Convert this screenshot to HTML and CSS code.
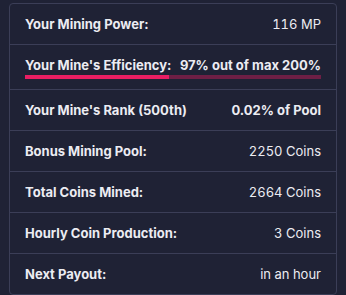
FILE: index.html
```html
<!DOCTYPE html>
<html>
<head>
<meta charset="utf-8">
<link rel="stylesheet" href="styles.css">
</head>
<body>
<div class="card">
  <div class="row"><span class="label">Your Mining Power:</span><span class="value">116 MP</span></div>
  <div class="row row-bar">
    <div class="line"><span class="label">Your Mine's Efficiency:</span><span class="value strong">97% out of max 200%</span></div>
    <div class="bar"><div class="fill" style="width:48.5%"></div></div>
  </div>
  <div class="row"><span class="label">Your Mine's Rank (500th)</span><span class="value strong">0.02% of Pool</span></div>
  <div class="row"><span class="label">Bonus Mining Pool:</span><span class="value">2250 Coins</span></div>
  <div class="row"><span class="label">Total Coins Mined:</span><span class="value">2664 Coins</span></div>
  <div class="row"><span class="label">Hourly Coin Production:</span><span class="value">3 Coins</span></div>
  <div class="row"><span class="label">Next Payout:</span><span class="value">in an hour</span></div>
</div>
</body>
</html>
```
FILE: styles.css
```css
html, body {
  margin: 0;
  padding: 0;
  background: #1f2235;
}
body {
  padding: 3px 9px 0 9px;
  font-family: Inter, "Noto Sans", sans-serif;
  font-size: 13px;
  line-height: 16px;
  color: #ececf2;
}
.card {
  border: 1px solid #3b3e57;
  border-radius: 4px;
  display: flex;
  flex-direction: column;
}
.row {
  display: flex;
  justify-content: space-between;
  align-items: center;
  padding: 12px 15px;
  border-bottom: 1px solid #3b3e57;
}
.row:last-child {
  border-bottom: none;
}
.row-bar {
  flex-direction: column;
  align-items: stretch;
  padding-bottom: 10px;
}
.line {
  display: flex;
  justify-content: space-between;
}
.label {
  font-weight: 700;
}
.value {
  font-weight: 400;
  font-variant-numeric: tabular-nums;
}
.value.strong {
  font-weight: 700;
  font-variant-numeric: normal;
}
.bar {
  margin-top: 2px;
  height: 4px;
  background: #6e1f45;
}
.fill {
  height: 100%;
  background: #e91e63;
}
```
